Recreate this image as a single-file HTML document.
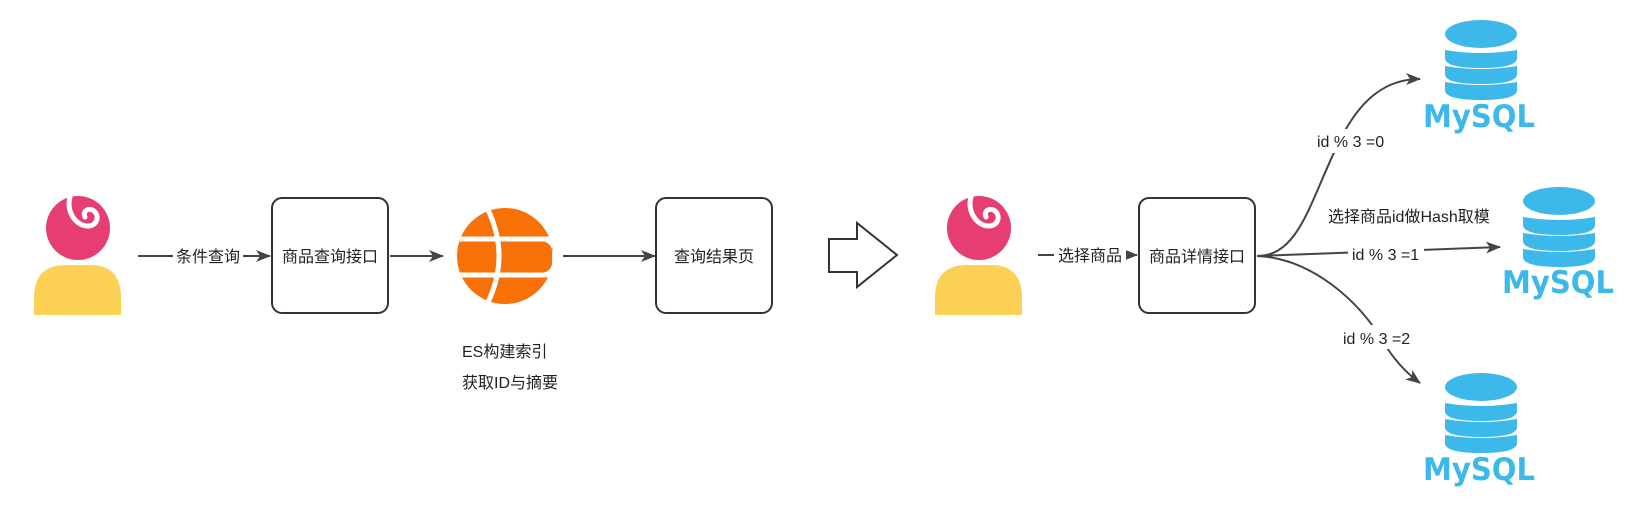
<!DOCTYPE html>
<html><head><meta charset="utf-8"><style>
html,body{margin:0;padding:0;background:#fff;}
svg{display:block;}
text{font-family:"Liberation Sans","Noto Sans CJK SC",sans-serif;font-size:16px;fill:#222;}
.my{font-family:"DejaVu Sans","Liberation Sans",sans-serif;font-weight:bold;font-size:31px;fill:#3db8ea;}
</style></head><body>
<svg width="1632" height="530" viewBox="0 0 1632 530" xmlns="http://www.w3.org/2000/svg">
<defs>
<marker id="ah" markerWidth="16" markerHeight="12" refX="14" refY="6" orient="auto" markerUnits="userSpaceOnUse">
<path d="M0,0 L15,6 L0,12 L4,6 Z" fill="#444"/></marker>
<g id="person">
<circle cx="0" cy="0" r="32" fill="#e63e72"/>
<path d="M-8,-31 C-12,-16 -2,-2 10,-2 C19,-2 22,-12 16,-17 C11,-21 4,-17 7,-11" fill="none" stroke="#fff" stroke-width="5" stroke-linecap="round"/>
<path d="M-44,87 L-44,70 Q-44,37 -12,37 L12,37 Q43,37 43,70 L43,87 Z" fill="#fcd054"/>
</g>
<g id="db">
<ellipse cx="36" cy="14" rx="36" ry="14" fill="#3db8ea"/>
<path d="M0,30 Q36,36 72,30 L72,38 Q72,48 36,48 Q0,48 0,38 Z" fill="#3db8ea"/>
<path d="M0,46 Q36,52 72,46 L72,54 Q72,64 36,64 Q0,64 0,54 Z" fill="#3db8ea"/>
<path d="M0,62 Q36,68 72,62 L72,70 Q72,80 36,80 Q0,80 0,70 Z" fill="#3db8ea"/>
</g>
</defs>

<use href="#person" x="78" y="228"/>
<use href="#person" x="979" y="228"/>

<line x1="138" y1="256" x2="270" y2="256" stroke="#444" stroke-width="2" marker-end="url(#ah)"/>
<rect x="173" y="245" width="70" height="22" fill="#fff"/>
<text x="208" y="262" text-anchor="middle">条件查询</text>

<rect x="272" y="198" width="116" height="115" rx="10" fill="#fff" stroke="#333" stroke-width="2"/>
<text x="330" y="262" text-anchor="middle">商品查询接口</text>

<line x1="390" y1="256" x2="443" y2="256" stroke="#444" stroke-width="2" marker-end="url(#ah)"/>

<clipPath id="esc"><circle cx="505" cy="256" r="48"/></clipPath>
<g clip-path="url(#esc)">
<rect x="455" y="205" width="100" height="105" fill="#f87108"/>
<path d="M484,202 Q514,256 484,310" stroke="#fff" stroke-width="5" fill="none"/>
<path d="M450,239 L560,239 M450,275 L560,275" stroke="#fff" stroke-width="5"/>
</g>
<path d="M540,241 L552,241 L552,273 L540,273 Q553,273 553,257 Q553,241 540,241Z" fill="#fff"/>

<text x="462" y="357">ES构建索引</text>
<text x="462" y="388">获取ID与摘要</text>

<line x1="563" y1="256" x2="655" y2="256" stroke="#444" stroke-width="2" marker-end="url(#ah)"/>
<rect x="656" y="198" width="116" height="115" rx="10" fill="#fff" stroke="#333" stroke-width="2"/>
<text x="714" y="262" text-anchor="middle">查询结果页</text>

<path d="M829,239 L857,239 L857,223 L897,255 L857,287 L857,272 L829,272 Z" fill="#fff" stroke="#333" stroke-width="2"/>

<line x1="1038" y1="255" x2="1137" y2="255" stroke="#444" stroke-width="2" marker-end="url(#ah)"/>
<rect x="1054" y="244" width="72" height="22" fill="#fff"/>
<text x="1090" y="261" text-anchor="middle">选择商品</text>

<rect x="1139" y="198" width="116" height="115" rx="10" fill="#fff" stroke="#333" stroke-width="2"/>
<text x="1197" y="262" text-anchor="middle">商品详情接口</text>

<path d="M1257,256 C1300,256 1310,200 1340,140 C1360,100 1385,79 1420,79" fill="none" stroke="#444" stroke-width="2" marker-end="url(#ah)"/>
<path d="M1257,256 L1500,247" fill="none" stroke="#444" stroke-width="2" marker-end="url(#ah)"/>
<path d="M1257,256 C1310,258 1360,300 1385,345 C1395,360 1405,372 1420,383" fill="none" stroke="#444" stroke-width="2" marker-end="url(#ah)"/>
<rect x="1313" y="129" width="76" height="24" fill="#fff"/>
<text x="1317" y="147">id % 3 =0</text>
<text x="1328" y="222">选择商品id做Hash取模</text>
<rect x="1348" y="243" width="76" height="22" fill="#fff"/>
<text x="1352" y="260">id % 3 =1</text>
<rect x="1339" y="325" width="76" height="24" fill="#fff"/>
<text x="1343" y="344">id % 3 =2</text>

<use href="#db" x="1445" y="20"/>
<text class="my" x="1423" y="127" textLength="112" lengthAdjust="spacingAndGlyphs">MySQL</text>
<use href="#db" x="1523" y="187"/>
<text class="my" x="1502" y="293" textLength="112" lengthAdjust="spacingAndGlyphs">MySQL</text>
<use href="#db" x="1445" y="373"/>
<text class="my" x="1423" y="480" textLength="112" lengthAdjust="spacingAndGlyphs">MySQL</text>
</svg>
</body></html>
